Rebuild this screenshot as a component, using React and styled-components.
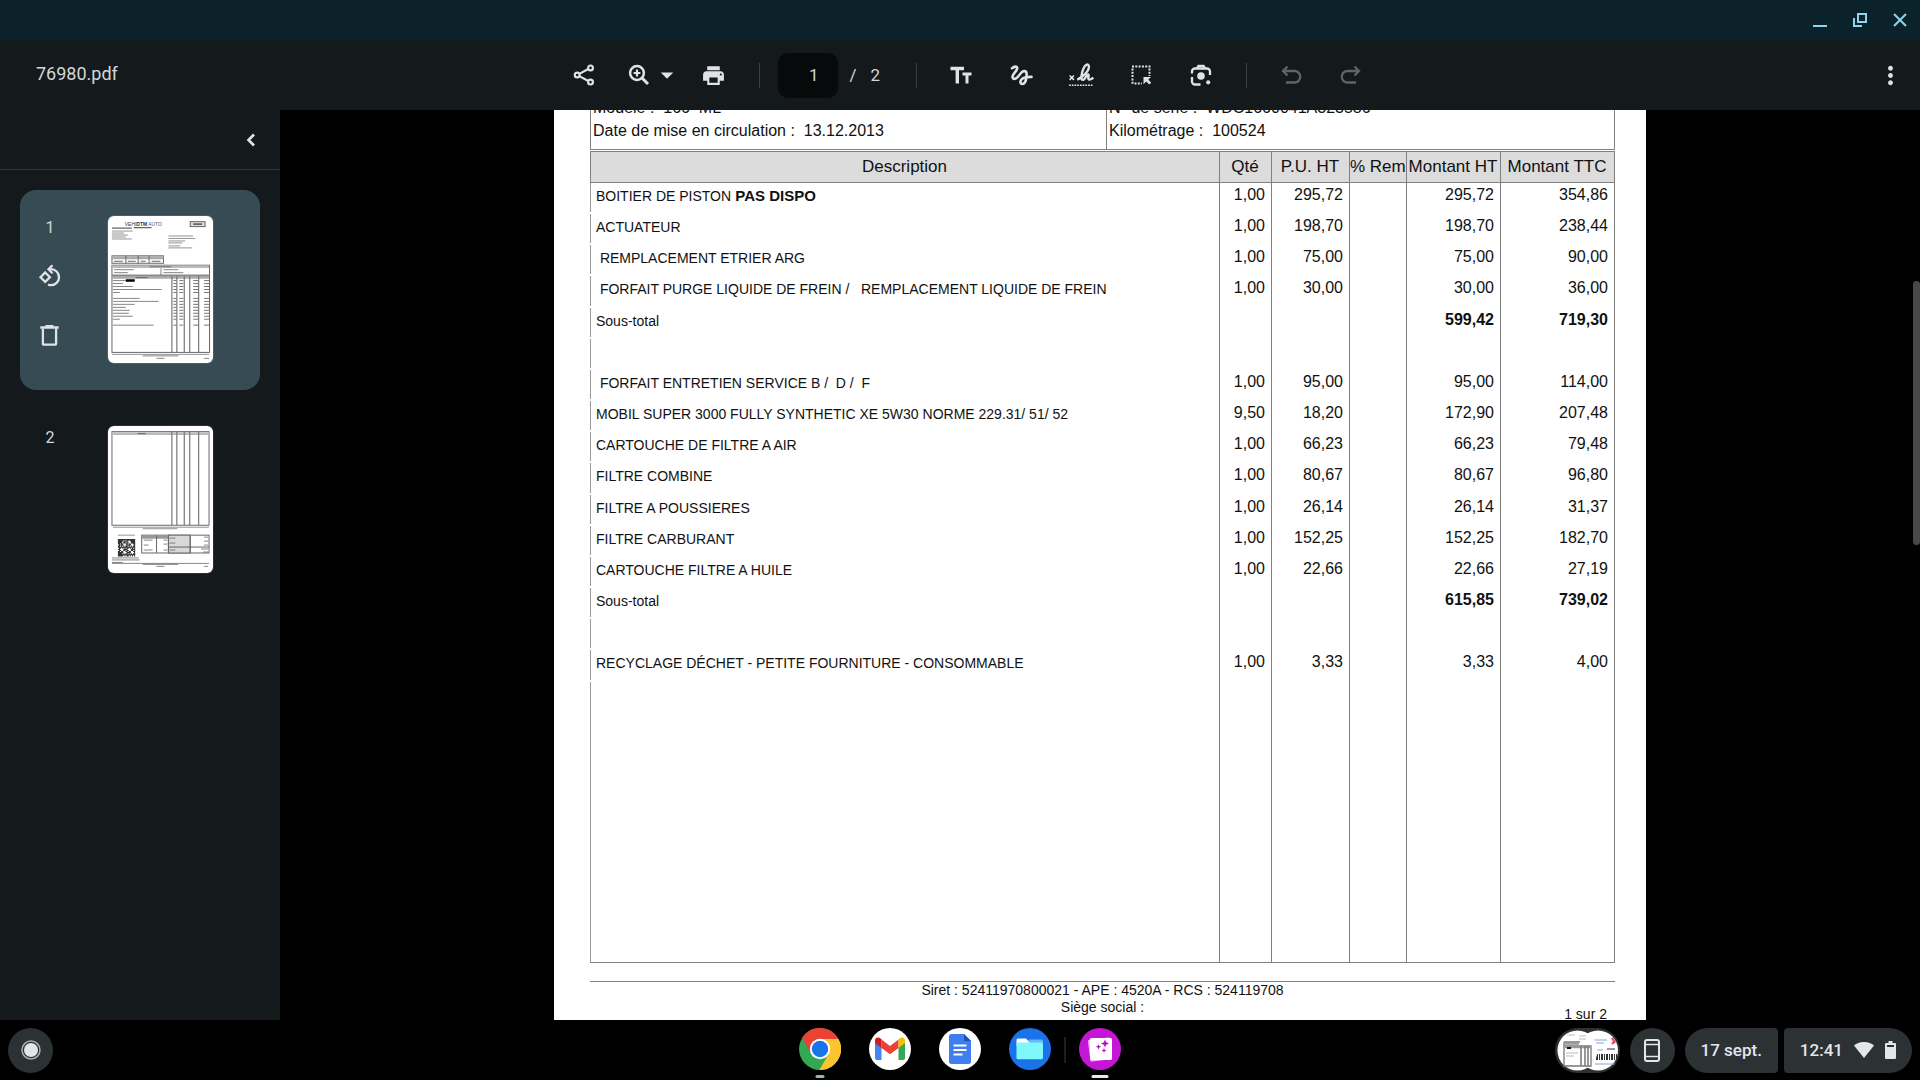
import React, { useState } from "react";
import styled, { createGlobalStyle } from "styled-components";
import { MdArrowDropDown, MdMoreVert, MdPrint } from "react-icons/md";

const UI_FONT = `Roboto, "Noto Sans", sans-serif`;
const DOC_FONT = `"Liberation Sans", Arial, sans-serif`;

const colors = {
  titleBar: "#0b222a",
  panel: "#14191c",
  selected: "#374b54",
  icon: "#dfe3e7",
  text: "#d3d7da",
  disabled: "#5f6467",
  pill: "#2c3134",
  rule: "#808080"
};

const lines = [
  { label: "BOITIER DE PISTON", note: "PAS DISPO", qty: "1,00", unit: "295,72", ht: "295,72", ttc: "354,86" },
  { label: "ACTUATEUR", qty: "1,00", unit: "198,70", ht: "198,70", ttc: "238,44" },
  { label: " REMPLACEMENT ETRIER ARG", qty: "1,00", unit: "75,00", ht: "75,00", ttc: "90,00" },
  { label: " FORFAIT PURGE LIQUIDE DE FREIN /   REMPLACEMENT LIQUIDE DE FREIN", qty: "1,00", unit: "30,00", ht: "30,00", ttc: "36,00" },
  { label: "Sous-total", ht: "599,42", ttc: "719,30", total: true },
  {},
  { label: " FORFAIT ENTRETIEN SERVICE B /  D /  F", qty: "1,00", unit: "95,00", ht: "95,00", ttc: "114,00" },
  { label: "MOBIL SUPER 3000 FULLY SYNTHETIC XE 5W30 NORME 229.31/ 51/ 52", qty: "9,50", unit: "18,20", ht: "172,90", ttc: "207,48" },
  { label: "CARTOUCHE DE FILTRE A AIR", qty: "1,00", unit: "66,23", ht: "66,23", ttc: "79,48" },
  { label: "FILTRE COMBINE", qty: "1,00", unit: "80,67", ht: "80,67", ttc: "96,80" },
  { label: "FILTRE A POUSSIERES", qty: "1,00", unit: "26,14", ht: "26,14", ttc: "31,37" },
  { label: "FILTRE CARBURANT", qty: "1,00", unit: "152,25", ht: "152,25", ttc: "182,70" },
  { label: "CARTOUCHE FILTRE A HUILE", qty: "1,00", unit: "22,66", ht: "22,66", ttc: "27,19" },
  { label: "Sous-total", ht: "615,85", ttc: "739,02", total: true },
  {},
  { label: "RECYCLAGE DÉCHET - PETITE FOURNITURE - CONSOMMABLE", qty: "1,00", unit: "3,33", ht: "3,33", ttc: "4,00" }
];

const ROW_COUNT = 25;
const rows = Array.from({ length: ROW_COUNT }, (_, i) => lines[i] || { filler: true });

const GlobalStyle = createGlobalStyle`
  * {
    box-sizing: border-box;
  }
  body {
    margin: 0;
    background: #000;
    font-family: ${UI_FONT};
  }
  button {
    padding: 0;
    border: 0;
    background: none;
    color: inherit;
    font: inherit;
    cursor: pointer;
  }
  svg {
    display: block;
  }
`;

const Desktop = styled.div`
  display: flex;
  flex-direction: column;
  height: 100vh;
  overflow: hidden;
  color: ${colors.text};
`;

const TitleBar = styled.header`
  display: flex;
  flex: none;
  justify-content: flex-end;
  align-items: center;
  gap: 16px;
  height: 40px;
  padding-right: 8px;
  background: ${colors.titleBar};
  color: #8fd3f0;
`;

const WindowButton = styled.button`
  display: grid;
  place-items: center;
  width: 24px;
  height: 24px;
`;

const Toolbar = styled.div`
  display: grid;
  flex: none;
  grid-template-columns: 1fr auto 1fr;
  align-items: center;
  height: 70px;
  padding: 0 22px 0 36px;
  background: ${colors.panel};
`;

const FileName = styled.h1`
  margin: 0;
  padding-bottom: 2px;
  font-size: 18px;
  font-weight: 400;
  line-height: 20px;
`;

const Tools = styled.div`
  display: flex;
  align-items: center;
`;

const ToolGroup = styled.div`
  display: flex;
  align-items: center;
  gap: ${props => props.$gap}px;
`;

const ToolButton = styled.button`
  display: grid;
  place-items: center;
  width: 40px;
  height: 40px;
  color: ${colors.icon};
  &:disabled {
    color: ${colors.disabled};
  }
`;

const CaretButton = styled(ToolButton)`
  width: 30px;
  margin: 0 -3px 0 -7px;
`;

const ToolDivider = styled.span`
  width: 1px;
  height: 25px;
  margin: 0 ${props => props.$after || 24}px 0 25px;
  background: #3a3f42;
`;

const PageInput = styled.input`
  width: 60px;
  height: 45px;
  padding: 0 19px 0 0;
  border: 0;
  border-radius: 10px;
  background: #07090a;
  color: ${colors.text};
  font: 17px ${UI_FONT};
  text-align: right;
`;

const PageCount = styled.span`
  display: flex;
  gap: 14px;
  width: 53px;
  padding-left: 12px;
  font-size: 17px;
`;

const ToolbarEnd = styled.div`
  display: flex;
  justify-content: flex-end;
  margin-right: -12px;
`;

const Main = styled.main`
  display: flex;
  flex: 1;
  min-height: 0;
`;

const Sidebar = styled.aside`
  flex: none;
  width: 280px;
  background: ${colors.panel};
`;

const SidebarHead = styled.div`
  display: flex;
  justify-content: flex-end;
  align-items: center;
  height: 60px;
  padding-right: 14px;
  border-bottom: 1px solid #33383b;
`;

const ThumbList = styled.ol`
  display: flex;
  flex-direction: column;
  gap: 10px;
  margin: 0;
  padding: 20px;
  list-style: none;
`;

const ThumbCard = styled.li`
  display: flex;
  align-items: flex-start;
  height: 200px;
  padding: 26px 47px 0 15px;
  border-radius: 16px;
  background: ${props => (props.$active ? colors.selected : "transparent")};
`;

const ThumbSide = styled.div`
  display: flex;
  flex: 1;
  flex-direction: column;
  align-items: flex-start;
  font-size: 16px;
  line-height: 24px;
`;

const ThumbNumber = styled.span`
  width: 30px;
  margin-bottom: 16px;
  text-align: center;
`;

const ThumbAction = styled.button`
  display: grid;
  place-items: center;
  width: 30px;
  height: 40px;
  color: ${colors.icon};
  & + & {
    margin-top: 19px;
  }
`;

const ThumbPreview = styled.button`
  overflow: hidden;
  width: 105px;
  height: 147px;
  border-radius: 6px;
  background: #fff;
  box-shadow: 0 0 0 1px ${props => (props.$active ? "#3f6571" : "#2b3033")};
`;

const Viewer = styled.section`
  position: relative;
  display: flex;
  flex: 1;
  justify-content: center;
  background: #000;
`;

const ScrollThumb = styled.div`
  position: absolute;
  top: 171px;
  right: 0;
  width: 7px;
  height: 264px;
  border-radius: 4px;
  background: #45494b;
`;

const Sheet = styled.article`
  overflow: hidden;
  width: 100%;
  max-width: 1092px;
  padding: 0 31px 0 36px;
  background: #fff;
  color: #111;
  font-family: ${DOC_FONT};
`;

const InfoBox = styled.div`
  display: grid;
  grid-template-columns: 515px 1fr;
  height: 40px;
  margin-bottom: 1px;
  border: 1px solid ${colors.rule};
  border-top: 0;
`;

const InfoColumn = styled.div`
  display: flex;
  flex-direction: column;
  justify-content: flex-end;
  overflow: hidden;
  padding: 0 2px 7px;
  font-size: 16px;
  line-height: 23px;
  white-space: pre;
  & + & {
    border-left: 1px solid ${colors.rule};
  }
`;

const InvoiceTable = styled.table`
  width: 100%;
  height: 812px;
  border-spacing: 0;
  table-layout: fixed;
  border-right: 1px solid ${colors.rule};
  border-bottom: 1px solid ${colors.rule};
`;

const Column = styled.col`
  width: ${props => (props.$width ? `${props.$width}px` : "auto")};
`;

const HeadCell = styled.th`
  height: 32px;
  padding: 0 1px 0 0;
  border: solid ${colors.rule};
  border-width: 1px 0 1px 1px;
  background: #dcdcdc;
  font-size: 17px;
  font-weight: 400;
  white-space: nowrap;
`;

const LabelCell = styled.td`
  padding: 4px 0 0 6px;
  background: linear-gradient(#999, #999) no-repeat left top / 1px
    ${props => (props.$solid ? "100%" : "calc(100% - 2px)")};
  font-size: 14px;
  line-height: 18px;
  vertical-align: top;
  white-space: pre;
  b {
    font-size: 15px;
  }
`;

const AmountCell = styled.td`
  height: 31px;
  padding: 3px 6px 0 0;
  border-left: 1px solid ${colors.rule};
  font-size: 16px;
  font-weight: ${props => (props.$bold ? 700 : 400)};
  line-height: 18px;
  text-align: right;
  vertical-align: top;
`;

const SheetFooter = styled.footer`
  display: grid;
  grid-template-columns: 1fr auto 1fr;
  margin-top: 18px;
  border-top: 1px solid ${colors.rule};
  font-size: 14px;
  line-height: 17px;
  text-align: center;
`;

const PageMark = styled.span`
  grid-column: 3;
  padding: 24px 8px 0 0;
  text-align: right;
`;

const FooterText = styled.p`
  grid-column: 2;
  margin: 0;
`;

const Shelf = styled.footer`
  display: grid;
  flex: none;
  grid-template-columns: 1fr auto 1fr;
  align-items: center;
  height: 60px;
  padding: 0 8px;
  background: #000;
`;

const Launcher = styled.button`
  display: grid;
  place-items: center;
  width: 45px;
  height: 45px;
  border-radius: 50%;
  background: ${colors.pill};
`;

const Apps = styled.nav`
  display: flex;
  align-items: center;
  gap: 28px;
`;

const AppButton = styled.button`
  position: relative;
  width: 42px;
  height: 44px;
  &::after {
    content: "";
    position: absolute;
    bottom: -6px;
    left: 50%;
    width: ${props => props.$mark || 0}px;
    height: 3px;
    border-radius: 2px;
    background: ${props => (props.$mark > 10 ? "#e8eaed" : "#9db4bd")};
    transform: translateX(-50%);
  }
  svg {
    margin-bottom: 2px;
  }
`;

const ShelfDivider = styled.span`
  width: 2px;
  height: 26px;
  margin: 0 -15px;
  background: #1c1e1f;
`;

const Status = styled.div`
  display: flex;
  justify-content: flex-end;
  align-items: center;
  gap: 6px;
  color: #e3e6e9;
  font-size: 17px;
  font-weight: 500;
`;

const Recent = styled.button`
  display: flex;
  align-items: center;
  width: 65px;
  height: 45px;
  margin-right: 4px;
  border-radius: 23px;
  background: ${colors.pill};
`;

const RoundButton = styled(Launcher)`
  margin-right: 4px;
`;

const Pill = styled.button`
  display: flex;
  align-items: center;
  gap: 11px;
  height: 45px;
  padding: 0 16px;
  border-radius: ${props =>
    props.$side === "left" ? "23px 4px 4px 23px" : "4px 23px 23px 4px"};
  background: ${colors.pill};
`;

const Stroked = ({ size = 24, width = 2, children }) => (
  <svg
    width={size}
    height={size}
    viewBox="0 0 24 24"
    fill="none"
    stroke="currentColor"
    strokeWidth={width}
  >
    {children}
  </svg>
);

const ShareIcon = () => (
  <Stroked width={2.2}>
    <circle cx="18.500" cy="4.900" r="2.400" />
    <circle cx="5.200" cy="12" r="2.400" />
    <circle cx="18.500" cy="19.100" r="2.400" />
    <path d="M7.300 10.900l9-4.900M7.300 13.100l9 4.900" />
  </Stroked>
);

const ZoomIcon = () => (
  <Stroked>
    <circle cx="10" cy="10" r="6.900" strokeWidth="2.500" />
    <path d="M15 15l6 6" strokeWidth="3" />
    <path d="M10 6.600v6.800M6.600 10h6.800" strokeWidth="2.200" />
  </Stroked>
);

const TextIcon = () => (
  <Stroked width={3.4}>
    <path d="M1.500 5.500h13.500M8.300 5v15.500" />
    <path d="M13.500 11h9M18 11v9.500" strokeWidth="3" />
  </Stroked>
);

const DrawIcon = () => (
  <Stroked width={2.6}>
    <path
      d="M3 5.200C5 3.600 8.400 2.600 8.200 5.400C8 8.200 3.600 10.600 3.500 13.600C3.400 16.400 6.200 16.600 8.600 14.200L12.200 9.800C14 7.600 17.300 7.400 17.600 10.500C17.800 15 16.600 20.800 13.500 21C11 21.200 10.800 18.200 12.800 16.200C15 14 18.500 13.800 22.500 13.900"
      strokeLinecap="round"
    />
  </Stroked>
);

const SignIcon = () => (
  <Stroked size={26} width={1.5}>
    <path d="M1.500 12.500l4 4M5.500 12.500l-4 4" />
    <path
      d="M8.500 16.300C13 14.500 19.500 8.500 19.300 4.200C19 1 16 2.200 14.300 6C12.300 10.500 11.300 17.200 14 16.400C16.300 15.600 17.300 11 18.700 11.500C20 12.200 17.700 15.600 19.300 16.200C20.700 16.600 22 15.600 23.500 14.600"
      strokeWidth="2.200"
    />
    <path d="M1 21.500h22.500" strokeDasharray="1.600 0.900" />
  </Stroked>
);

const SelectIcon = () => (
  <Stroked>
    <path
      d="M3 3.500H21.500M3.500 5.500V21.500M20.500 5.500V13M5.500 20.500H13"
      strokeDasharray="2 1.300"
    />
    <path
      d="M14.500 14h7.500l-2.700 2.600 2.900 3.100-1.900 1.900-3.100-3.100-2.700 2.800z"
      fill="currentColor"
      stroke="none"
    />
  </Stroked>
);

const LensIcon = () => (
  <Stroked width={2.3}>
    <path d="M3 10.500V8.500a3 3 0 013-3h12a3 3 0 013 3v3.500M3 14v4.500a3 3 0 003 3h5.500" />
    <path d="M8 5.200L9.500 3h5L16 5.200" />
    <circle cx="12" cy="13" r="3.800" fill="currentColor" stroke="none" />
    <circle cx="19.200" cy="19.300" r="2.100" fill="currentColor" stroke="none" />
  </Stroked>
);

const UndoIcon = ({ flip }) => (
  <Stroked width={2.3}>
    <g transform={flip ? "translate(24 0) scale(-1 1)" : undefined}>
      <path d="M8.500 3.500L4 8l4.500 4.500M4.500 8H15.500a5.500 5.500 0 010 11.500H7" />
    </g>
  </Stroked>
);

const ChevronIcon = () => (
  <Stroked width={2.6}>
    <path d="M15 6.500L9.500 12l5.500 5.500" />
  </Stroked>
);

const RotateIcon = () => (
  <Stroked width={2.3}>
    <path d="M7.200 8.500l4.700 4.700-4.700 4.700-4.700-4.700z" />
    <path d="M11.500 5.200h1.500a8 8 0 010 16q-1.500 0-3-.6" />
    <path d="M14.500 1.200l-4 4 4 4" />
  </Stroked>
);

const TrashIcon = () => (
  <Stroked width={2.3}>
    <path d="M4.900 5.500V20.800a.8.8 0 00.8.8h11.600a.8.800 0 00.8-.8V5.500" />
    <path d="M2.300 4.500h18.400M7.500 3.200h8" />
  </Stroked>
);

const AppFrame = ({ fill, children }) => (
  <svg width="42" height="42" viewBox="0 0 42 42">
    <circle cx="21" cy="21" r="21" fill={fill} />
    {children}
  </svg>
);

const ChromeLogo = () => (
  <AppFrame fill="#34a853">
    <path d="M3.100 10A21 21 0 0139.500 11H21L12.300 26z" fill="#ea4335" />
    <path d="M39.500 11A21 21 0 0120.400 42L29.700 26 21 11z" fill="#fbc531" />
    <circle cx="21" cy="21" r="10.200" fill="#fff" />
    <circle cx="21" cy="21" r="8.200" fill="#1a73e8" />
  </AppFrame>
);

const GmailLogo = () => (
  <AppFrame fill="#fff">
    <path d="M6 14l6.500 5v13H8a2 2 0 01-2-2z" fill="#4285f4" />
    <path d="M36 14l-6.500 5v13H34a2 2 0 002-2z" fill="#34a853" />
    <path d="M12.500 11.500L21 18l8.500-6.500V20L21 26.200 12.500 20z" fill="#ea4335" />
    <path d="M6 15v-2.500c0-3.400 3.900-4.200 6.500-1V20z" fill="#c5221f" />
    <path d="M36 15v-2.500c0-3.400-3.900-4.200-6.500-1V20z" fill="#fbbc04" />
  </AppFrame>
);

const DocsLogo = () => (
  <AppFrame fill="#fff">
    <path
      d="M12.500 6H25l7 7v20.500a2.500 2.500 0 01-2.500 2.500h-17a2.500 2.500 0 01-2.500-2.500v-25A2.500 2.500 0 0112.500 6z"
      fill="#3f7df0"
    />
    <path d="M25 6l7 7h-7z" fill="#1d4fb8" />
    <path d="M14.500 17.500h13M14.500 22h13M14.500 26.500h9" stroke="#fff" strokeWidth="2" />
  </AppFrame>
);

const FilesLogo = () => (
  <AppFrame fill="#1a73e8">
    <path d="M20 11.500h12.500a1.500 1.500 0 011.500 1.500v2H20z" fill="#69b8f5" />
    <path d="M7.500 12a1.500 1.500 0 011.500-1.500h8l3 3v4.500H7.500z" fill="#fff" />
    <rect x="7.500" y="14.500" width="26.500" height="16.800" rx="1.500" fill="#7ff7fb" />
  </AppFrame>
);

const GalleryLogo = () => (
  <AppFrame fill="#c516d6">
    <rect x="10" y="10.500" width="22" height="22" rx="1.500" fill="#f5b8f4" transform="rotate(-7 21 21)" />
    <rect x="11" y="10" width="22" height="22" rx="1.500" fill="#fff" />
    <path
      d="M26 11.500l1.200 2.800 2.800 1.200-2.800 1.200L26 19.500l-1.200-2.800-2.800-1.200 2.800-1.200zM19.500 16l.8 2 2 .8-2 .8-.8 2-.8-2-2-.8 2-.8zM25 20l.7 1.800 1.800.7-1.800.7L25 25l-.7-1.800-1.800-.7 1.800-.7z"
      fill="#b015c5"
    />
  </AppFrame>
);

// miniature of the invoice, drawn at the preview's own scale
const ColumnRules = ({ top, bottom }) =>
  [64.5, 69.5, 77, 82.5, 91.5].map(x => (
    <path key={x} d={`M${x} ${top}V${bottom}`} stroke="#777" strokeWidth="1.200" />
  ));

const FirstPreview = () => (
  <svg width="105" height="147" viewBox="0 0 106 148" fill="none" stroke="#666">
    <text x="17" y="10" fontSize="5" fill="#333" stroke="none" fontFamily="Liberation Sans">
      <tspan>VEHI</tspan>
      <tspan fontWeight="700">DTM</tspan>
      <tspan fill="#457"> AUTO</tspan>
    </text>
    <path d="M4 12h20M26 11.500h18" strokeWidth="1.200" />
    <path d="M4 15h21M4 17h12M4 19h16M4 21h14M4 23h20" strokeWidth="0.700" />
    <rect x="83" y="5.500" width="15" height="5" fill="#ddd" />
    <path d="M86 8h9" strokeWidth="2" />
    <path d="M61 20h25M61 22.500h27M61 25h17M61 27h14M61 30h12M61 32h24" strokeWidth="0.700" />
    <rect x="4" y="40" width="52" height="7.500" />
    <path d="M4 42H56" stroke="#aaa" strokeWidth="3" />
    <path d="M18 40v7.500M30.500 40v7.500M41.500 40v7.500M6 45.500h9M20 45.500h8M33 45.500h5M44 45.500h9" />
    <rect x="4" y="49.500" width="98.500" height="10" />
    <path d="M4 51H102" stroke="#bbb" strokeWidth="2.500" />
    <path d="M42 51h22M53.500 52.500v7M6 54h20M6 57h14M56 54h15M56 57h20" strokeWidth="0.800" />
    <rect x="4" y="60.500" width="98.500" height="77" />
    <path d="M4 62h98" stroke="#aaa" strokeWidth="2.500" />
    <path d="M28 62h12" />
    <ColumnRules top={60} bottom={138} />
    <path d="M5 65h13" strokeWidth="0.800" />
    <path d="M18 65h9" stroke="#000" strokeWidth="2.500" />
    <path
      d="M5 68h10M5 71h20M5 74h49M5 77h7M5 83h27M5 86h46M5 89h22M5 92h13M5 95h17M5 98h16M5 101h20M5 104h7M5 110h41"
      strokeWidth="0.800"
    />
    {[65, 68, 71, 74, 77, 83, 86, 89, 92, 95, 98, 101, 104, 110].map(y => (
      <path key={y} d={`M66 ${y}h3M72 ${y}h4M86 ${y}h5M97 ${y}h5`} strokeWidth="0.900" />
    ))}
    <path d="M4 139.500h98" strokeWidth="0.700" />
    <path d="M35 141h36M49 143.500h8M97 143.500h5" strokeWidth="0.800" />
  </svg>
);

const QR_SIZE = 16;
const QR_CELL = 1.09;
const qrCells = [];
for (let y = 0; y < QR_SIZE; y++) {
  for (let x = 0; x < QR_SIZE; x++) {
    const corner = (x < 4 && y < 4) || (x > 11 && y < 4) || (x < 4 && y > 11);
    if (corner || (x * x * 7 + y * 11 + x * y * 3) % 7 < 4) {
      qrCells.push(`M${10 + x * QR_CELL} ${114 + y * QR_CELL}h1.090v1.090h-1.090z`);
    }
  }
}

const SecondPreview = () => (
  <svg width="105" height="147" viewBox="0 0 106 148" fill="none" stroke="#666">
    <rect x="4" y="5.500" width="98" height="94.500" />
    <path d="M4 7.500h98" stroke="#bbb" strokeWidth="3" />
    <path d="M30 7.500h8" />
    <ColumnRules top={5} bottom={100} />
    <path d="M5 102h97M35 103.500h35M10 110h17" strokeWidth="0.700" />
    <path d={qrCells.join("")} fill="#333" stroke="none" />
    <path d="M4 133h27M4 135h28M4 137.500h11" strokeWidth="0.800" />
    <rect x="34" y="110" width="68" height="18" />
    <rect x="61" y="110" width="22" height="18" fill="#d8d8d8" />
    <path d="M34 112h27" stroke="#999" strokeWidth="3" />
    <path d="M49 110v18M61 110v18M83 110v18M61 122h41" />
    <path
      d="M36 115h9M36 120h5M36 125h9M56 115h4M56 119h4M56 125h4M62 113h6M62 118h6M62 125h6M97 112h4M97 116h4M97 120h4M94 124h7M96 127h5"
      strokeWidth="0.800"
    />
    <path d="M4 138.500h98M35 139.500h36M49 141.500h8M97 141.500h4" strokeWidth="0.800" />
  </svg>
);

const RecentPreviews = () => (
  <svg width="65" height="45" viewBox="0 0 65 45">
    <circle cx="43" cy="22.500" r="20" fill="#fff" />
    <path d="M39 12h13M40 15h9M42 22h6M40 36h20" stroke="#8ea2d0" strokeWidth="1.200" />
    <path d="M41 29h21" stroke="#333" strokeWidth="6" strokeDasharray="2 1 1 1" />
    <path d="M57 10l3 5M57 16l3-3" stroke="#dc4360" strokeWidth="2" />
    <path d="M52 21h8" stroke="#777" strokeWidth="1.500" />
    <circle cx="22.500" cy="22.500" r="20" fill="#fff" />
    <path d="M9 14H25M9 14V38H36V18H9" fill="none" stroke="#777" strokeWidth="1.300" />
    <path d="M9 15.500h15M9 19h27" stroke="#999" strokeWidth="2.500" />
    <path d="M26 18v20M30 18v20M33 18v20" stroke="#777" strokeWidth="1.500" />
    <path d="M12 20h4" stroke="#111" strokeWidth="2" />
    <path d="M11 25h12M11 28h8M12 7h8M24 8h7M24 11h7" stroke="#bbb" />
  </svg>
);

const InvoiceRow = ({ row }) => (
  <tr>
    <LabelCell $solid={row.filler}>
      {row.label}
      {row.note && <b> {row.note}</b>}
    </LabelCell>
    <AmountCell>{row.qty}</AmountCell>
    <AmountCell>{row.unit}</AmountCell>
    <AmountCell />
    <AmountCell $bold={row.total}>{row.ht}</AmountCell>
    <AmountCell $bold={row.total}>{row.ttc}</AmountCell>
  </tr>
);

const App = () => {
  const [page, setPage] = useState("1");

  return (
    <Desktop>
      <GlobalStyle />
      <TitleBar>
        <WindowButton aria-label="Réduire">
          <svg width="16" height="16" stroke="currentColor" strokeWidth="2">
            <path d="M1 14h14" />
          </svg>
        </WindowButton>
        <WindowButton aria-label="Restaurer">
          <svg width="16" height="16" stroke="currentColor" strokeWidth="2" fill="none">
            <path d="M6 2h8v8H6zM2 6v8h8" />
          </svg>
        </WindowButton>
        <WindowButton aria-label="Fermer">
          <svg width="16" height="16" stroke="currentColor" strokeWidth="2">
            <path d="M2 2l12 12M14 2L2 14" />
          </svg>
        </WindowButton>
      </TitleBar>

      <Toolbar>
        <FileName>76980.pdf</FileName>
        <Tools>
          <ToolGroup $gap={15}>
            <ToolButton aria-label="Partager">
              <ShareIcon />
            </ToolButton>
            <ToolGroup $gap={0}>
              <ToolButton aria-label="Zoom">
                <ZoomIcon />
              </ToolButton>
              <CaretButton aria-label="Options de zoom">
                <MdArrowDropDown size={30} />
              </CaretButton>
            </ToolGroup>
            <ToolButton aria-label="Imprimer">
              <MdPrint size={25} />
            </ToolButton>
          </ToolGroup>
          <ToolDivider $after={18} />
          <PageInput
            aria-label="Page"
            value={page}
            onChange={e => setPage(e.target.value)}
          />
          <PageCount>
            <span>/</span>
            <span>2</span>
          </PageCount>
          <ToolDivider />
          <ToolGroup $gap={20}>
            <ToolButton aria-label="Texte">
              <TextIcon />
            </ToolButton>
            <ToolButton aria-label="Dessiner">
              <DrawIcon />
            </ToolButton>
            <ToolButton aria-label="Signer">
              <SignIcon />
            </ToolButton>
            <ToolButton aria-label="Sélectionner">
              <SelectIcon />
            </ToolButton>
            <ToolButton aria-label="Rechercher une image">
              <LensIcon />
            </ToolButton>
          </ToolGroup>
          <ToolDivider />
          <ToolGroup $gap={20}>
            <ToolButton disabled aria-label="Annuler">
              <UndoIcon />
            </ToolButton>
            <ToolButton disabled aria-label="Rétablir">
              <UndoIcon flip />
            </ToolButton>
          </ToolGroup>
        </Tools>
        <ToolbarEnd>
          <ToolButton aria-label="Plus">
            <MdMoreVert size={29} />
          </ToolButton>
        </ToolbarEnd>
      </Toolbar>

      <Main>
        <Sidebar>
          <SidebarHead>
            <ThumbAction aria-label="Masquer les pages">
              <ChevronIcon />
            </ThumbAction>
          </SidebarHead>
          <ThumbList>
            <ThumbCard $active>
              <ThumbSide>
                <ThumbNumber>1</ThumbNumber>
                <ThumbAction aria-label="Pivoter">
                  <RotateIcon />
                </ThumbAction>
                <ThumbAction aria-label="Supprimer">
                  <TrashIcon />
                </ThumbAction>
              </ThumbSide>
              <ThumbPreview $active aria-label="Page 1">
                <FirstPreview />
              </ThumbPreview>
            </ThumbCard>
            <ThumbCard>
              <ThumbSide>
                <ThumbNumber>2</ThumbNumber>
              </ThumbSide>
              <ThumbPreview aria-label="Page 2">
                <SecondPreview />
              </ThumbPreview>
            </ThumbCard>
          </ThumbList>
        </Sidebar>

        <Viewer>
          <Sheet>
            <InfoBox>
              <InfoColumn>
                <span>{"Modèle :  166  ML"}</span>
                <span>{"Date de mise en circulation :  13.12.2013"}</span>
              </InfoColumn>
              <InfoColumn>
                <span>{"N° de série :  WDC1660041A323586"}</span>
                <span>{"Kilométrage :  100524"}</span>
              </InfoColumn>
            </InfoBox>
            <InvoiceTable>
              <colgroup>
                <Column />
                <Column $width={52} />
                <Column $width={78} />
                <Column $width={57} />
                <Column $width={94} />
                <Column $width={114} />
              </colgroup>
              <thead>
                <tr>
                  <HeadCell>Description</HeadCell>
                  <HeadCell>Qté</HeadCell>
                  <HeadCell>P.U. HT</HeadCell>
                  <HeadCell>% Rem</HeadCell>
                  <HeadCell>Montant HT</HeadCell>
                  <HeadCell>Montant TTC</HeadCell>
                </tr>
              </thead>
              <tbody>
                {rows.map((row, i) => (
                  <InvoiceRow key={i} row={row} />
                ))}
              </tbody>
            </InvoiceTable>
            <SheetFooter>
              <FooterText>
                Siret : 52411970800021 - APE : 4520A - RCS : 524119708
                <br />
                Siège social :
              </FooterText>
              <PageMark>1 sur 2</PageMark>
            </SheetFooter>
          </Sheet>
          <ScrollThumb />
        </Viewer>
      </Main>

      <Shelf>
        <Launcher aria-label="Lanceur">
          <svg width="24" height="24" viewBox="0 0 24 24">
            <circle cx="12" cy="12" r="9" fill="none" stroke="#a9adb0" strokeWidth="1.500" />
            <circle cx="12" cy="12" r="7" fill="#e3e6e9" />
          </svg>
        </Launcher>
        <Apps>
          <AppButton $mark={9} aria-label="Chrome">
            <ChromeLogo />
          </AppButton>
          <AppButton aria-label="Gmail">
            <GmailLogo />
          </AppButton>
          <AppButton aria-label="Docs">
            <DocsLogo />
          </AppButton>
          <AppButton aria-label="Fichiers">
            <FilesLogo />
          </AppButton>
          <ShelfDivider />
          <AppButton $mark={17} aria-label="Galerie">
            <GalleryLogo />
          </AppButton>
        </Apps>
        <Status>
          <Recent aria-label="Fichiers récents">
            <RecentPreviews />
          </Recent>
          <RoundButton aria-label="Téléphone">
            <svg width="16" height="23" viewBox="0 0 16 23" fill="none" stroke="currentColor" strokeWidth="2">
              <rect x="1" y="1" width="14" height="21" rx="2" />
              <path d="M1 5.500h14M1 17.500h14" strokeWidth="1.700" />
            </svg>
          </RoundButton>
          <Pill $side="left">17 sept.</Pill>
          <Pill>
            12:41
            <svg width="20" height="16" viewBox="0 0 20 16" fill="currentColor">
              <path d="M0 3.500C5.800-1.200 14.200-1.200 20 3.500L10 16z" />
            </svg>
            <svg width="11" height="18" viewBox="0 0 11 18" fill="currentColor">
              <path d="M3.500 0h4v2H10a1 1 0 011 1v14a1 1 0 01-1 1H1a1 1 0 01-1-1V3a1 1 0 011-1h2.500zM2 4v2h7V4z" />
            </svg>
          </Pill>
        </Status>
      </Shelf>
    </Desktop>
  );
};

export default App;
